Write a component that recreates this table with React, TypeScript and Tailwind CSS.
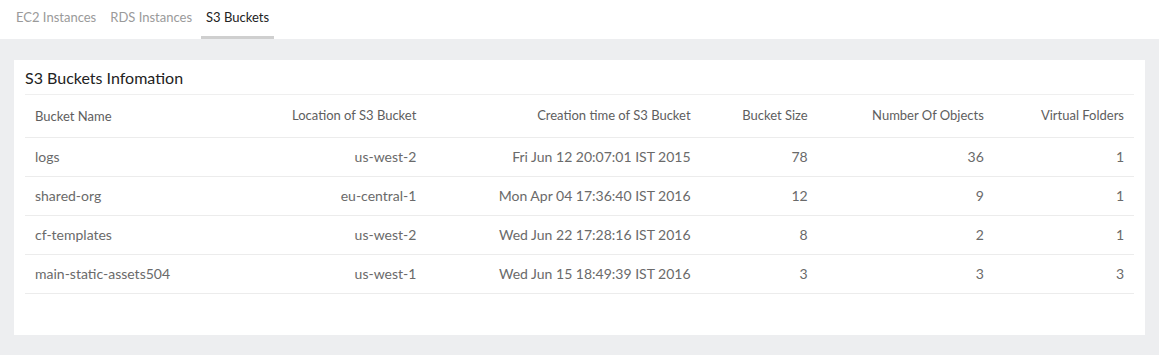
import React from "react";

type Bucket = {
    name: string;
    location: string;
    created: string;
    size: number;
    objects: number;
    folders: number;
};

const buckets: Bucket[] = [
    { name: "logs", location: "us-west-2", created: "Fri Jun 12 20:07:01 IST 2015", size: 78, objects: 36, folders: 1 },
    { name: "shared-org", location: "eu-central-1", created: "Mon Apr 04 17:36:40 IST 2016", size: 12, objects: 9, folders: 1 },
    { name: "cf-templates", location: "us-west-2", created: "Wed Jun 22 17:28:16 IST 2016", size: 8, objects: 2, folders: 1 },
    { name: "main-static-assets504", location: "us-west-1", created: "Wed Jun 15 18:49:39 IST 2016", size: 3, objects: 3, folders: 3 },
];

const tabs = ["EC2 Instances", "RDS Instances", "S3 Buckets"];

export default function App() {
    return (
        <div className="w-[1159px] h-[355px] bg-[#edeef0] font-['Lato',sans-serif] flex flex-col">
            {/* tabs */}
            <div className="bg-white h-[39px] flex items-stretch pl-[11px] gap-[4px]">
                {tabs.map((t) => {
                    const active = t === "S3 Buckets";
                    return (
                        <div
                            key={t}
                            className={`px-[5px] flex items-center text-[13px] border-b-[3px] ${active ? "text-[#222] border-[#cfcfcf]" : "text-[#9a9a9a] border-transparent"}`}
                        >
                            {t}
                        </div>
                    );
                })}
            </div>

            {/* card */}
            <div className="mx-[14px] mt-[21px] bg-white h-[275px] px-[11px]">
                <div className="h-[35px] flex items-center pt-[1px] border-b border-[#efefef] text-[16px] text-[#222]">
                    S3 Buckets Infomation
                </div>
                <table className="w-full border-collapse table-fixed">
                    <colgroup>
                        <col className="w-[200px]" />
                        <col className="w-[201px]" />
                        <col className="w-[274px]" />
                        <col className="w-[117px]" />
                        <col className="w-[176px]" />
                        <col className="w-[140px]" />
                    </colgroup>
                    <thead>
                        <tr className="h-[42px] border-b border-[#ececec] text-[#5e5e5e] text-[13px]">
                            <th className="font-normal text-left px-[10px] pt-[1px]">Bucket Name</th>
                            <th className="font-normal text-right px-[10px]">Location of S3 Bucket</th>
                            <th className="font-normal text-right px-[10px]">Creation time of S3 Bucket</th>
                            <th className="font-normal text-right px-[10px]">Bucket Size</th>
                            <th className="font-normal text-right px-[10px]">Number Of Objects</th>
                            <th className="font-normal text-right px-[10px]">Virtual Folders</th>
                        </tr>
                    </thead>
                    <tbody className="text-[#6a6a6a] text-[14px]">
                        {buckets.map((b) => (
                            <tr key={b.name} className="h-[39px] border-b border-[#ececec]">
                                <td className="text-left px-[10px]">{b.name}</td>
                                <td className="text-right px-[10px]">{b.location}</td>
                                <td className="text-right px-[10px]">{b.created}</td>
                                <td className="text-right px-[10px]">{b.size}</td>
                                <td className="text-right px-[10px]">{b.objects}</td>
                                <td className="text-right px-[10px]">{b.folders}</td>
                            </tr>
                        ))}
                    </tbody>
                </table>
            </div>
        </div>
    );
}
